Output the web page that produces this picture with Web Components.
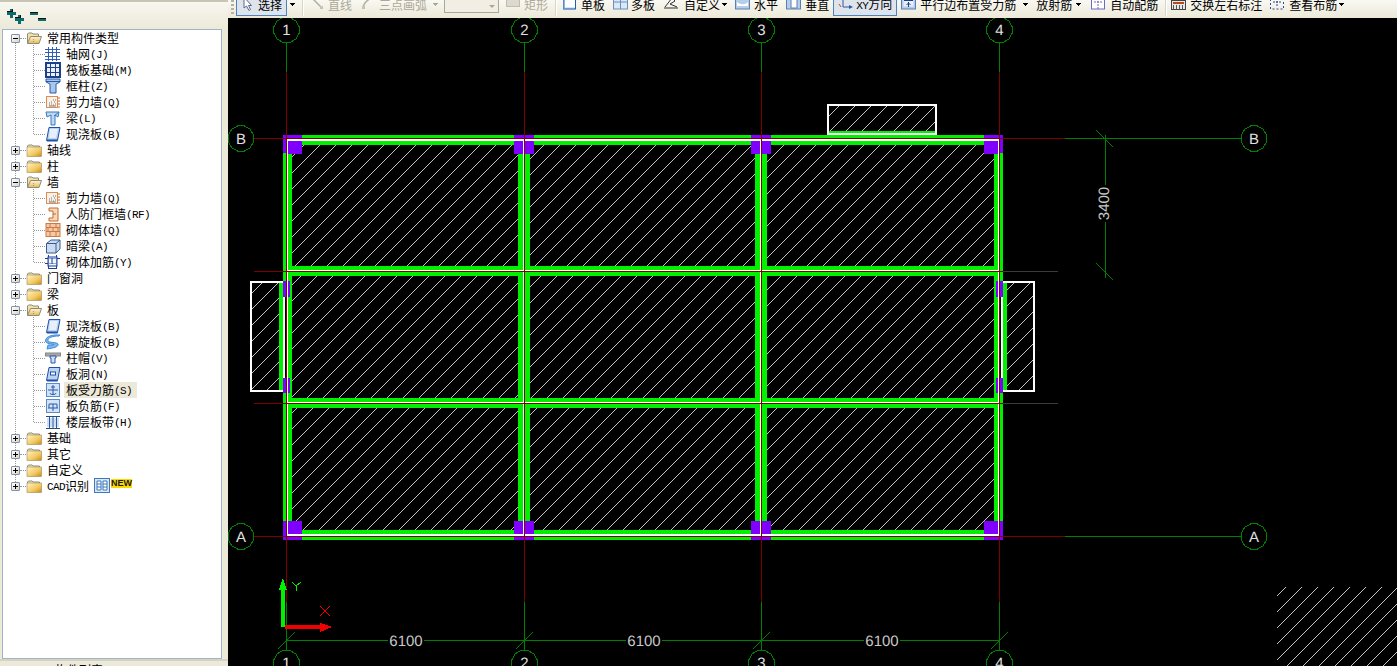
<!DOCTYPE html>
<html lang="zh">
<head>
<meta charset="utf-8">
<title>构件</title>
<style>
  html, body { margin: 0; height: 100%; overflow: hidden; background: #ece9d8; }
</style>
</head>
<body>
<app-shell>
  <side-panel slot="side">
    <tree-node kind="root" open>常用构件类型
      <tree-node icon="grid" slot="kids">轴网<small>(J)</small></tree-node>
      <tree-node icon="raft" slot="kids">筏板基础<small>(M)</small></tree-node>
      <tree-node icon="column" slot="kids">框柱<small>(Z)</small></tree-node>
      <tree-node icon="shear" slot="kids">剪力墙<small>(Q)</small></tree-node>
      <tree-node icon="beam" slot="kids">梁<small>(L)</small></tree-node>
      <tree-node icon="slab" slot="kids">现浇板<small>(B)</small></tree-node>
    </tree-node>
    <tree-node kind="root">轴线</tree-node>
    <tree-node kind="root">柱</tree-node>
    <tree-node kind="root" open>墙
      <tree-node icon="shear" slot="kids">剪力墙<small>(Q)</small></tree-node>
      <tree-node icon="door" slot="kids">人防门框墙<small>(RF)</small></tree-node>
      <tree-node icon="brick" slot="kids">砌体墙<small>(Q)</small></tree-node>
      <tree-node icon="hidden" slot="kids">暗梁<small>(A)</small></tree-node>
      <tree-node icon="rebar" slot="kids">砌体加筋<small>(Y)</small></tree-node>
    </tree-node>
    <tree-node kind="root">门窗洞</tree-node>
    <tree-node kind="root">梁</tree-node>
    <tree-node kind="root" open>板
      <tree-node icon="slab" slot="kids">现浇板<small>(B)</small></tree-node>
      <tree-node icon="spiral" slot="kids">螺旋板<small>(B)</small></tree-node>
      <tree-node icon="cap" slot="kids">柱帽<small>(V)</small></tree-node>
      <tree-node icon="hole" slot="kids">板洞<small>(N)</small></tree-node>
      <tree-node icon="force" slot="kids" selected>板受力筋<small>(S)</small></tree-node>
      <tree-node icon="neg" slot="kids">板负筋<small>(F)</small></tree-node>
      <tree-node icon="strip" slot="kids">楼层板带<small>(H)</small></tree-node>
    </tree-node>
    <tree-node kind="root">基础</tree-node>
    <tree-node kind="root">其它</tree-node>
    <tree-node kind="root">自定义</tree-node>
    <tree-node kind="root"><small>CAD</small>识别<cad-icon name="cadid"></cad-icon><new-badge>NEW</new-badge></tree-node>
  </side-panel>
  <tool-bar slot="bar">
    <tool-grip></tool-grip>
    <tool-button icon="pointer" active style="margin-left:2px;--gap:1px">选择</tool-button>
    <tool-arrow style="margin-left:2px"></tool-arrow>
    <tool-sep style="margin-left:5px"></tool-sep>
    <tool-button icon="line" disabled style="margin-left:7px">直线</tool-button>
    <tool-button icon="arc" disabled style="margin-left:9px">三点画弧</tool-button>
    <tool-arrow disabled style="margin-left:5px"></tool-arrow>
    <tool-combo style="margin-left:4px"></tool-combo>
    <tool-button icon="rect" disabled style="margin-left:7px">矩形</tool-button>
    <tool-sep style="margin-left:7px"></tool-sep>
    <tool-button icon="single" style="margin-left:7px">单板</tool-button>
    <tool-button icon="multi" style="margin-left:8px">多板</tool-button>
    <tool-button icon="custom" style="margin-left:11px">自定义</tool-button>
    <tool-arrow style="margin-left:1px"></tool-arrow>
    <tool-button icon="horiz" style="margin-left:7px">水平</tool-button>
    <tool-button icon="vert" style="margin-left:9px">垂直</tool-button>
    <tool-button icon="xy" active style="margin-left:4px"><small>XY</small>方向</tool-button>
    <tool-button icon="parallel" style="margin-left:5px">平行边布置受力筋</tool-button>
    <tool-arrow style="margin-left:6px"></tool-arrow>
    <tool-button style="margin-left:6px">放射筋</tool-button>
    <tool-arrow style="margin-left:3px"></tool-arrow>
    <tool-button icon="auto" style="margin-left:9px">自动配筋</tool-button>
    <tool-sep style="margin-left:7px"></tool-sep>
    <tool-button icon="swap" style="margin-left:6px">交换左右标注</tool-button>
    <tool-button icon="view" style="margin-left:9px">查看布筋</tool-button>
    <tool-arrow style="margin-left:1px"></tool-arrow>
  </tool-bar>
  <cad-canvas slot="canvas"></cad-canvas>
</app-shell>

<script>
const CJK = '"Noto Sans CJK SC", "Liberation Sans", sans-serif';
const MONO = '"Liberation Mono", "Noto Sans CJK SC", monospace';

const ICONS = {
  // tree icons
  grid: `<path d="M0 3.5H15M0 6.5H15M0 10.5H15M3.5 1V15M7.5 1V15M11.5 1V15" stroke="#2f5fb4" fill="none"/><path d="M0 13.5H15" stroke="#2f5fb4"/>`,
  raft: `<rect x="1" y="1" width="14" height="14" fill="#eaf1fb" stroke="#1c3f8c" stroke-width="2"/><path d="M5.5 2V14M10.5 2V14M2 5.5H14M2 10.5H14" stroke="#1c3f8c"/>`,
  column: `<path d="M1 1H15V4L11 6V15H5V6L1 4Z" fill="#a9c7ea" stroke="#2a5ba8"/><path d="M1 3.5H15" stroke="#2a5ba8"/>`,
  shear: `<rect x="1.5" y="2.5" width="11" height="11" fill="#fbf0e6" stroke="#d98e5a"/><path d="M4 11h1M6 10h1M8 11h1M10 10h1M4 12h7M6 8h1M9 8h1M8 6h1M10 6h1M4 9h1" stroke="#777"/><path d="M13 4h2M13 7h2M13 10h2M13 13h2" stroke="#d8660c"/>`,
  beam: `<path d="M1 2H14L13 7L10 5V15H6V5L2 7Z" fill="#bcd8f2" stroke="#3d78bc"/><path d="M9 6L14 2" stroke="#3d78bc"/>`,
  slab: `<path d="M4 1.5H15L12.5 14.5H1.5Z" fill="#b8d2f0" stroke="#1f4fa8"/><path d="M2 14.5H12.5" stroke="#1f4fa8" stroke-width="2"/><path d="M5 3H13L11 12H4Z" fill="#e6f0fb"/>`,
  door: `<path d="M4 2H13V15H4V12H8V5H4Z" fill="#f6d9bd" stroke="#c8692a"/><path d="M8 8H11" stroke="#c8692a"/>`,
  brick: `<rect x="1" y="1.5" width="14" height="13" fill="#f5c9a6" stroke="#c97a45"/><path d="M1 5.5H15M1 9.5H15M5 1.5V5.5M11 1.5V5.5M3 5.5V9.5M8 5.5V9.5M13 5.5V9.5M5 9.5V14.5M11 9.5V14.5" stroke="#c97a45"/>`,
  hidden: `<path d="M1.5 5.5L6 2H15V11L11 15H1.5Z" fill="#c8dcf2" stroke="#3a5a90"/><path d="M1.5 5.5H11V15M11 5.5L15 2" fill="none" stroke="#3a5a90"/>`,
  rebar: `<path d="M0 4.5H15M3.5 1V15M11.5 1V15M0 9.5H11M3.5 14.5H11" stroke="#1c3f9c" fill="none"/><rect x="3" y="3" width="9" height="9" fill="#e8eefb" fill-opacity=".6" stroke="#1c3f9c"/><path d="M7 4V10" stroke="#1c3f9c"/>`,
  spiral: `<path d="M14 2C7 2 2 4 3 7C4 9 12 8 13 10C14 13 8 14 2 15L3 11C7 11 9 11 9 10.5C7 10 1 10 0.5 7C0.5 2 8 0.5 15 1Z" fill="#7ab7ee" stroke="#3d8ad8"/>`,
  cap: `<rect x="0.5" y="3" width="15" height="3" fill="#a8a8a8" stroke="#888"/><path d="M5 6H11V8H10V13H6V8H5Z" fill="#cfe0f2" stroke="#2a5ba8"/>`,
  hole: `<path d="M4 1.5H15L12.5 14.5H1.5Z" fill="#bdd4f0" stroke="#1f4fa8"/><rect x="5.5" y="6" width="5" height="3" fill="#fff" stroke="#1f4fa8"/><path d="M2 14.5H12.5" stroke="#1f4fa8" stroke-width="2"/>`,
  force: `<rect x="1.5" y="1.5" width="13" height="13" fill="#d4e3f6" stroke="#5a8ac8"/><path d="M8 3V13M3 8H13M5 11C5 13 11 13 11 11M6 5H10" stroke="#2a5ba8" fill="none"/>`,
  neg: `<rect x="1.5" y="1.5" width="13" height="13" fill="#d4e3f6" stroke="#5a8ac8"/><path d="M4 6H12V10M4 10V6M8 6V13M3 10H13" stroke="#2a5ba8" fill="none"/>`,
  strip: `<path d="M1 2.5H15M1 14.5H15" stroke="#2a4a78"/><path d="M2 4H14V13H2Z" fill="#cfe0f2"/><path d="M4.5 3V14M8 3V14M11.5 3V14" stroke="#2a5ba8"/>`,
  cadid: `<rect x="0.5" y="0.5" width="15" height="14" fill="#dbe8f8" stroke="#3d78bc"/><path d="M3 3H7V12H3ZM9 3H13V12H9Z" fill="#fff" stroke="#3d78bc"/><path d="M3 6H7M3 9H7M9 6H13M9 9H13" stroke="#3d78bc"/>`,
  // toolbar icons
  pointer: `<path d="M3 0V11L5.5 9L8 13.5L9.5 12.5L7.5 8.5H10.5Z" fill="#fff" stroke="#5a6a8a"/>`,
  line: `<path d="M1 0L12 11" stroke="#b4b0a0" stroke-width="1.5"/><rect x="10" y="9" width="3" height="3" fill="#c8c4b4"/>`,
  arc: `<path d="M2 11C3 5 7 2 13 0" stroke="#b4b0a0" stroke-width="1.5" fill="none"/><rect x="1" y="9" width="3" height="3" fill="#c8c4b4"/>`,
  rect: `<rect x="0.5" y="-1" width="13" height="10.5" fill="#dcdace" stroke="#c0bcac"/>`,
  single: `<rect x="0.5" y="-2" width="12" height="14" fill="#fff" stroke="#2a5ba8"/><path d="M1 0V11.5H12" stroke="#6a9ad8" stroke-width="1.5" fill="none"/>`,
  multi: `<rect x="0.5" y="-2" width="14" height="14" fill="#dbe8f8" stroke="#6a8ec0"/><path d="M0.5 5H14.5M7.5 -2V12" stroke="#6a8ec0"/>`,
  custom: `<path d="M-2 11H12M-1 10L6 1L9 4L4 7L11 10" stroke="#333" fill="none"/>`,
  horiz: `<rect x="-0.5" y="-2" width="14" height="14" fill="#b4cdea" stroke="#5a80b0"/><path d="M1 5C5 8 9 8 12 5V9H1Z" fill="#fff"/>`,
  vert: `<rect x="-0.5" y="-2" width="14" height="14" fill="#b4cdea" stroke="#5a80b0"/><path d="M4 0H10V11H4Z" fill="#fff" stroke="#5a80b0"/>`,
  xy: `<path d="M5 -1V10H12" stroke="#2a5ba8" fill="none"/><path d="M3 2L5 -2L7 2ZM11 8L15 10L11 12Z" fill="#2a5ba8"/><path d="M1 7L3 10" stroke="#c84a1a"/>`,
  parallel: `<rect x="-0.5" y="-2" width="14" height="14" fill="#b4cdea" stroke="#5a80b0"/><rect x="1.5" y="1.5" width="10" height="8" fill="#e8f0fa"/><path d="M2 3.5H11M6.5 5V10M4.5 8L6.5 6L8.5 8" stroke="#1c3f8c" fill="none"/>`,
  auto: `<rect x="-0.5" y="-2" width="13" height="14" fill="#fff" stroke="#6a6ac0"/><path d="M6 -2V12M2 5H10" stroke="#6a6ac0" stroke-dasharray="2 1"/>`,
  swap: `<rect x="-0.5" y="3.5" width="14" height="9" fill="#e8e8e8" stroke="#444"/><path d="M1 6H12" stroke="#b84a1a" stroke-width="2"/><path d="M1.5 8V12M4.5 8V12M7.5 8V12M10.5 8V12" stroke="#555"/><path d="M0 2C3 -1 5 -1 6 1M13 0C10 2 8 2 7 1" stroke="#2a6ab8" fill="none"/>`,
  view: `<rect x="-0.5" y="-2" width="13" height="14" fill="none" stroke="#2a4a98" stroke-dasharray="2 2"/><path d="M6 1V9M2 5H10" stroke="#2a4a98" stroke-dasharray="2 1"/>`
};

const folderOpen = `<svg width="16" height="13" viewBox="0 0 16 13">
  <path d="M1.5 11.5V2L2.5 1H6L7 2H12.5V4" fill="#f3e2a8" stroke="#8d8a7c"/>
  <path d="M1.5 11.5L4.5 4.5H15.5L13 11.5Z" fill="url(#fo)" stroke="#8d8a7c"/>
  <defs><linearGradient id="fo" x1="0" y1="0" x2="0" y2="1"><stop offset="0" stop-color="#fff6d2"/><stop offset="1" stop-color="#e8b850"/></linearGradient></defs>
</svg>`;
const folderShut = `<svg width="16" height="13" viewBox="0 0 16 13">
  <path d="M1.5 3V2L2.5 1H6L7 2H13.5V3" fill="#f3e2a8" stroke="#8d8a7c"/>
  <rect x="1" y="3" width="14.5" height="9.5" fill="url(#fs)" stroke="#9a8a60" stroke-width=".6"/>
  <defs><linearGradient id="fs" x1="0" y1="0" x2="1" y2="1"><stop offset="0" stop-color="#fff4c4"/><stop offset=".6" stop-color="#f2c860"/><stop offset="1" stop-color="#c88a18"/></linearGradient></defs>
</svg>`;

class CadIcon extends HTMLElement {
  connectedCallback() {
    const root = this.shadowRoot || this.attachShadow({ mode: "open" });
    root.innerHTML = `
      <style>:host { display: inline-block; width: 16px; height: 16px; flex: none; } svg { display: block; overflow: visible; }</style>
      <svg width="16" height="16" viewBox="0 0 16 16">${ICONS[this.getAttribute("name")] || ""}</svg>`;
  }
}
customElements.define("cad-icon", CadIcon);

const shellTemplate = document.createElement("template");
shellTemplate.innerHTML = `
  <style>
    :host {
      display: grid;
      grid-template-columns: 228px 1fr;
      grid-template-rows: 18px 1fr;
      width: 1397px;
      height: 666px;
      overflow: hidden;
      background: #ece9d8;
    }
    .side { grid-row: 1 / 3; display: flex; min-height: 0; }
    ::slotted([slot="side"]) { flex: 1; }
  </style>
  <div class="side"><slot name="side"></slot></div>
  <slot name="bar"></slot>
  <slot name="canvas"></slot>
`;
class AppShell extends HTMLElement {
  constructor() {
    super();
    this.attachShadow({ mode: "open" });
    this.shadowRoot.append(shellTemplate.content.cloneNode(true));
  }
}
customElements.define("app-shell", AppShell);

const sideTemplate = document.createElement("template");
sideTemplate.innerHTML = `
  <style>
    :host { display: flex; flex-direction: column; min-width: 0; border-top: 2px solid #c9c5b5; box-sizing: border-box; height: 666px; }
    .head {
      height: 27px;
      box-sizing: border-box;
      background: linear-gradient(#f8f7f0, #ece9d8);
      display: flex;
      align-items: center;
      gap: 6px;
      padding: 2px 0 0 7px;
    }
    .list {
      flex: none;
      height: 630px;
      box-sizing: border-box;
      margin: 0 6px 0 2px;
      border: 1px solid #9db4cd;
      background: #fff;
      position: relative;
    }
    .list::before {
      content: "";
      position: absolute;
      left: 11.5px;
      top: 8px;
      height: 448px;
      border-left: 1px dotted #999;
    }
    .foot {
      flex: 1;
      overflow: hidden;
      border-top: 2px solid #d6d3c4;
      font: 12px/12px ${CJK};
      text-align: center;
      padding: 3px 70px 0 0;
      white-space: nowrap;
    }
  </style>
  <div class="head">
    <svg width="17" height="15" viewBox="0 0 17 15" shape-rendering="crispEdges"><path d="M3 0h3v3h3v3H6v3H3V6H0V3h3zM11 6h3v3h3v3h-3v3h-3v-3H8V9h3z" fill="#0c6a68"/><path d="M0 3h6V0h-1v2H0zM8 9h6V6h-1v2H8z" fill="#111"/></svg>
    <svg width="17" height="15" viewBox="0 0 17 15" shape-rendering="crispEdges"><path d="M0 3h8v3H0zM8 9h8v3H8z" fill="#0c6a68"/><path d="M0 3h8v1H0zM8 9h8v1H8z" fill="#111"/></svg>
  </div>
  <div class="list"><slot></slot></div>
  <div class="foot">构件列表</div>
`;
class SidePanel extends HTMLElement {
  constructor() {
    super();
    this.attachShadow({ mode: "open" });
    this.shadowRoot.append(sideTemplate.content.cloneNode(true));
  }
}
customElements.define("side-panel", SidePanel);

class TreeNode extends HTMLElement {
  connectedCallback() {
    if (this.shadowRoot) return;
    const root = this.attachShadow({ mode: "open" });
    const isRoot = this.getAttribute("kind") === "root";
    const open = this.hasAttribute("open");
    const marker = isRoot
      ? `<span class="box">${open ? "" : '<i class="v"></i>'}<i class="h"></i></span><span class="dots"></span><span class="folder">${open ? folderOpen : folderShut}</span>`
      : `<span class="dots kid"></span><cad-icon name="${this.getAttribute("icon")}"></cad-icon>`;
    root.innerHTML = `
      <style>
        :host { display: block; font: 12px/16px ${CJK}; color: #000; }
        .row { display: flex; align-items: center; height: 16px; white-space: nowrap; padding-left: ${isRoot ? 8 : 31}px; }
        .box {
          flex: none; position: relative; width: 9px; height: 9px; box-sizing: border-box;
          border: 1px solid #7f93a8; border-radius: 1px;
          background: linear-gradient(135deg, #fff, #d8d4c4);
        }
        .box i { position: absolute; background: #000; }
        .box .h { left: 1px; top: 3px; width: 5px; height: 1px; }
        .box .v { left: 3px; top: 1px; width: 1px; height: 5px; }
        .dots { flex: none; width: 6px; border-top: 1px dotted #999; }
        .dots.kid { width: 11px; }
        .folder { flex: none; display: block; height: 13px; margin-right: 5px; }
        .folder svg { display: block; }
        .text { ${isRoot ? "" : "margin-left: 3px; padding: 0 2px;"} height: 16px; }
        .text span { display: block; height: 16px; }
        :host([selected]) .text { background: #ece9d8; padding-right: 5px; }
        ::slotted(small) { font: 11px/16px ${MONO}; letter-spacing: -0.6px; vertical-align: 1px; }
        ::slotted(cad-icon) { margin-left: 5px; vertical-align: top; }
        ::slotted(new-badge) { margin-left: 1px; vertical-align: top; }
        .kids { position: relative; }
        .kids::before { content: ""; position: absolute; left: 30px; top: -7px; bottom: 8px; border-left: 1px dotted #999; }
      </style>
      <div class="row">${marker}<div class="text"><span><slot></slot></span></div></div>
      ${open ? '<div class="kids"><slot name="kids"></slot></div>' : ""}`;
  }
}
customElements.define("tree-node", TreeNode);

const badgeTemplate = document.createElement("template");
badgeTemplate.innerHTML = `
  <style>
    :host {
      display: inline-block;
      width: 21px;
      height: 9px;
      margin-top: 1px;
      background: #ffd800;
      color: #1a1a1a;
      font: bold 9px/9px "Liberation Sans", sans-serif;
      text-align: center;
    }
  </style><slot></slot>`;
class NewBadge extends HTMLElement {
  constructor() {
    super();
    this.attachShadow({ mode: "open" });
    this.shadowRoot.append(badgeTemplate.content.cloneNode(true));
  }
}
customElements.define("new-badge", NewBadge);

const barTemplate = document.createElement("template");
barTemplate.innerHTML = `
  <style>
    :host {
      display: flex;
      align-items: flex-end;
      height: 18px;
      box-sizing: border-box;
      overflow: hidden;
      padding: 0 0 2px 3px;
      background: linear-gradient(#f9f8f2, #ece9d8);
    }
  </style><slot></slot>`;
class ToolBar extends HTMLElement {
  constructor() {
    super();
    this.attachShadow({ mode: "open" });
    this.shadowRoot.append(barTemplate.content.cloneNode(true));
  }
}
customElements.define("tool-bar", ToolBar);

class ToolButton extends HTMLElement {
  connectedCallback() {
    if (this.shadowRoot) return;
    const icon = this.getAttribute("icon");
    const root = this.attachShadow({ mode: "open" });
    root.innerHTML = `
      <style>
        :host {
          display: flex; flex: none; align-items: center; gap: var(--gap, 2px);
          height: 22px; box-sizing: border-box;
          font: 12px/12px ${CJK}; color: #000; white-space: nowrap;
        }
        :host([disabled]) { color: #aca899; }
        :host([active]) { padding: 0 4px; border: 1px solid #4f82bd; background: #dde4ec; }
        ::slotted(small) { font: 11px/12px ${MONO}; letter-spacing: -0.6px; }
        span { display: block; }
      </style>
      ${icon ? `<cad-icon name="${icon}"></cad-icon>` : ""}<span><slot></slot></span>`;
  }
}
customElements.define("tool-button", ToolButton);

class ToolArrow extends HTMLElement {
  connectedCallback() {
    if (this.shadowRoot) return;
    const root = this.attachShadow({ mode: "open" });
    const c = this.hasAttribute("disabled") ? "#aca899" : "#000";
    root.innerHTML = `
      <style>:host { display: block; flex: none; width: 8px; height: 22px; } svg { display: block; }</style>
      <svg width="8" height="22" viewBox="0 0 8 22" shape-rendering="crispEdges"><path d="M1 9h5v1H1zM2 10h3v1H2zM3 11h1v1H3z" fill="${c}"/></svg>`;
  }
}
customElements.define("tool-arrow", ToolArrow);

const simpleStyles = {
  "tool-grip": `:host { display: block; flex: none; width: 3px; height: 16px; background: repeating-linear-gradient(#b5b2a3 0 2px, transparent 2px 4px); }`,
  "tool-sep": `:host { display: block; flex: none; width: 1px; height: 18px; background: #d8d5c6; box-shadow: 1px 0 0 #fff; }`,
  "tool-combo": `:host { display: block; flex: none; position: relative; width: 55px; height: 19px; box-sizing: border-box; margin-bottom: 3px; border: 1px solid #aca899; background: #f1efe4; }
    :host::after { content: ""; position: absolute; right: 3px; bottom: 4px; border: 3px solid transparent; border-top: 3px solid #aca899; border-bottom: 0; }`
};
for (const [name, css] of Object.entries(simpleStyles)) {
  customElements.define(name, class extends HTMLElement {
    constructor() {
      super();
      this.attachShadow({ mode: "open" }).innerHTML = `<style>${css}</style>`;
    }
  });
}

// drawing, all coordinates are the page's own (viewBox starts at 228,18)
function box(x1, y1, x2, y2, fill) {
  return `<rect x="${x1}" y="${y1}" width="${x2 - x1}" height="${y2 - y1}" fill="${fill}"/>`;
}
function seg(x1, y1, x2, y2, stroke) {
  return `<line x1="${x1}" y1="${y1}" x2="${x2}" y2="${y2}" stroke="${stroke}"/>`;
}
function bubble(cx, cy, label) {
  let pts = "";
  for (let i = 0; i < 12; i++) {
    const a = (i + 0.5) * Math.PI / 6;
    pts += `${(cx + 13 * Math.cos(a)).toFixed(1)},${(cy + 13 * Math.sin(a)).toFixed(1)} `;
  }
  return `<polygon points="${pts}" fill="#000" stroke="#008000"/>
    <text x="${cx}" y="${cy + 5}" class="axis">${label}</text>`;
}

const AX = [286, 524, 761, 999];
const BEAM_V = [[283, 292], [518, 530], [755, 767], [994, 1003]];
const BEAM_H = [[135, 145], [266, 276], [398, 408], [530, 540]];
const GREEN = "#00f000", PURPLE = "#7f00ff", WHITE = "#fff", RED = "#800000", DIM = "#008000";

function drawPlan() {
  let out = "";
  // hatched rooms
  for (let c = 0; c < 3; c++) for (let r = 0; r < 3; r++) {
    out += box(BEAM_V[c][1], BEAM_H[r][1], BEAM_V[c + 1][0], BEAM_H[r + 1][0], "url(#hatch)");
  }
  // side slabs
  out += box(252, 283, 279, 390, "url(#hatch)") + box(1007, 283, 1033, 390, "url(#hatch)") + box(829, 106, 935, 131, "url(#hatch)");
  // beams
  for (const [a, b] of BEAM_H) out += box(283, a, 1003, b, GREEN);
  for (const [a, b] of BEAM_V) out += box(a, 135, b, 540, GREEN);
  // openings of the beams next to the side slabs
  out += box(283, 297, 287, 378, "#000") + box(1000, 297, 1003, 378, "#000");
  // white lines
  out += box(287, 139, 999, 141, WHITE) + box(287, 534, 999, 536, WHITE);
  out += box(287, 270, 999, 271, WHITE) + box(287, 402, 999, 403, WHITE);
  out += box(287, 139, 288, 536, WHITE) + box(523, 139, 524, 536, WHITE) + box(760, 139, 761, 536, WHITE) + box(998, 139, 999, 536, WHITE);
  // side slab frames
  out += box(250, 281, 283, 283, WHITE) + box(250, 390, 283, 392, WHITE) + box(250, 281, 252, 392, WHITE) + box(279, 283, 283, 390, GREEN) + box(283, 282, 285, 391, WHITE);
  out += box(1003, 281, 1035, 283, WHITE) + box(1003, 390, 1035, 392, WHITE) + box(1033, 281, 1035, 392, WHITE) + box(1003, 283, 1007, 390, GREEN) + box(1001, 282, 1003, 391, WHITE);
  out += box(827, 104, 937, 106, WHITE) + box(827, 104, 829, 135, WHITE) + box(935, 104, 937, 135, WHITE) + box(829, 131, 935, 133, GREEN) + box(829, 133, 935, 135, WHITE);
  // columns
  const cols = [[283, 302], [514, 534], [751, 771], [984, 1003]];
  cols.forEach(([a, b], i) => {
    out += box(a, 135, b, 138, PURPLE) + box(a, 537, b, 540, PURPLE);
    if (i === 0) {
      out += box(283, 135, 286, 153, PURPLE) + box(283, 521, 286, 540, PURPLE);
      out += box(288, 141, 302, 154, PURPLE) + box(288, 521, 302, 534, PURPLE);
    } else if (i === 3) {
      out += box(1000, 135, 1003, 153, PURPLE) + box(1000, 521, 1003, 540, PURPLE);
      out += box(984, 141, 998, 154, PURPLE) + box(984, 521, 998, 534, PURPLE);
    } else {
      const ax = AX[i];
      out += box(a, 141, ax - 1, 154, PURPLE) + box(ax + 1, 141, b, 154, PURPLE);
      out += box(a, 521, ax - 1, 534, PURPLE) + box(ax + 1, 521, b, 534, PURPLE);
    }
  });
  // small columns at the side slabs
  for (const [a, b] of [[281, 297], [378, 393]]) {
    out += box(283, a, 286, b, PURPLE) + box(288, a, 290, b, PURPLE) + box(996, a, 998, b, PURPLE) + box(1000, a, 1003, b, PURPLE);
  }
  return out;
}

function drawAxes() {
  let out = "";
  for (const x of AX) {
    out += seg(x + 0.5, 43, x + 0.5, 72, DIM) + seg(x + 0.5, 72, x + 0.5, 602, RED) + seg(x + 0.5, 602, x + 0.5, 650, DIM);
  }
  for (const y of [138, 536]) {
    out += seg(254, y + 0.5, 1065, y + 0.5, RED) + seg(1065, y + 0.5, 1241, y + 0.5, DIM);
  }
  for (const y of [271, 403]) {
    out += seg(254, y + 0.5, 1003, y + 0.5, RED) + seg(1003, y + 0.5, 1058, y + 0.5, "#3a3a3a");
  }
  // dimensions
  out += seg(286, 640.5, 999, 640.5, DIM);
  for (const x of AX) out += seg(x - 8, 649, x + 9, 632, DIM);
  out += seg(1105.5, 135, 1105.5, 278, DIM) + seg(1096, 130, 1113, 147, DIM) + seg(1096, 263, 1113, 280, DIM);
  for (const x of [406, 644, 882]) {
    out += box(x - 18, 634, x + 18, 648, "#000") + `<text x="${x}" y="646" class="dim">6100</text>`;
  }
  out += box(1096, 185, 1114, 222, "#000") + `<text x="1109" y="203.5" class="dim" transform="rotate(-90 1109 203.5)">3400</text>`;
  AX.forEach((x, i) => {
    out += bubble(x + 0.5, 30, i + 1) + bubble(x + 0.5, 663, i + 1);
  });
  out += bubble(241, 138.5, "B") + bubble(1254, 138.5, "B") + bubble(241, 536.5, "A") + bubble(1254, 536.5, "A");
  // ucs
  out += box(281, 586, 285, 627, "#00f000") + `<path d="M283 578L287 590H279Z" fill="#00f000"/>`;
  out += box(285, 625, 322, 629, "#f00000") + `<path d="M332 627L320 632V623Z" fill="#f00000"/>`;
  out += seg(292, 582, 296, 586, "#00f000") + seg(301, 582, 296, 586, "#00f000") + seg(296, 586, 296, 591, "#00f000");
  out += seg(320, 606, 330, 616, "#f00000") + seg(330, 606, 320, 616, "#f00000");
  return out;
}

class CadCanvas extends HTMLElement {
  connectedCallback() {
    if (this.shadowRoot) return;
    const root = this.attachShadow({ mode: "open" });
    root.innerHTML = `
      <style>
        :host { display: block; background: #000; overflow: hidden; min-width: 0; }
        svg { display: block; }
        text { text-rendering: geometricPrecision; shape-rendering: auto; }
        .axis { font: 15px "Liberation Sans", sans-serif; fill: #e0e0e0; text-anchor: middle; }
        .dim { font: 15px "Liberation Sans", sans-serif; fill: #c8c8c8; text-anchor: middle; }
      </style>
      <svg width="1169" height="648" viewBox="228 18 1169 648" shape-rendering="crispEdges">
        <defs>
          <pattern id="hatch" patternUnits="userSpaceOnUse" x="1" y="0" width="16" height="16">
            <path d="M0 16L16 0" stroke="#c4c4c4" fill="none"/>
          </pattern>
        </defs>
        ${drawPlan()}
        ${drawAxes()}
        ${box(1277, 587, 1397, 666, "url(#hatch)")}
      </svg>`;
  }
}
customElements.define("cad-canvas", CadCanvas);
</script>
</body>
</html>
